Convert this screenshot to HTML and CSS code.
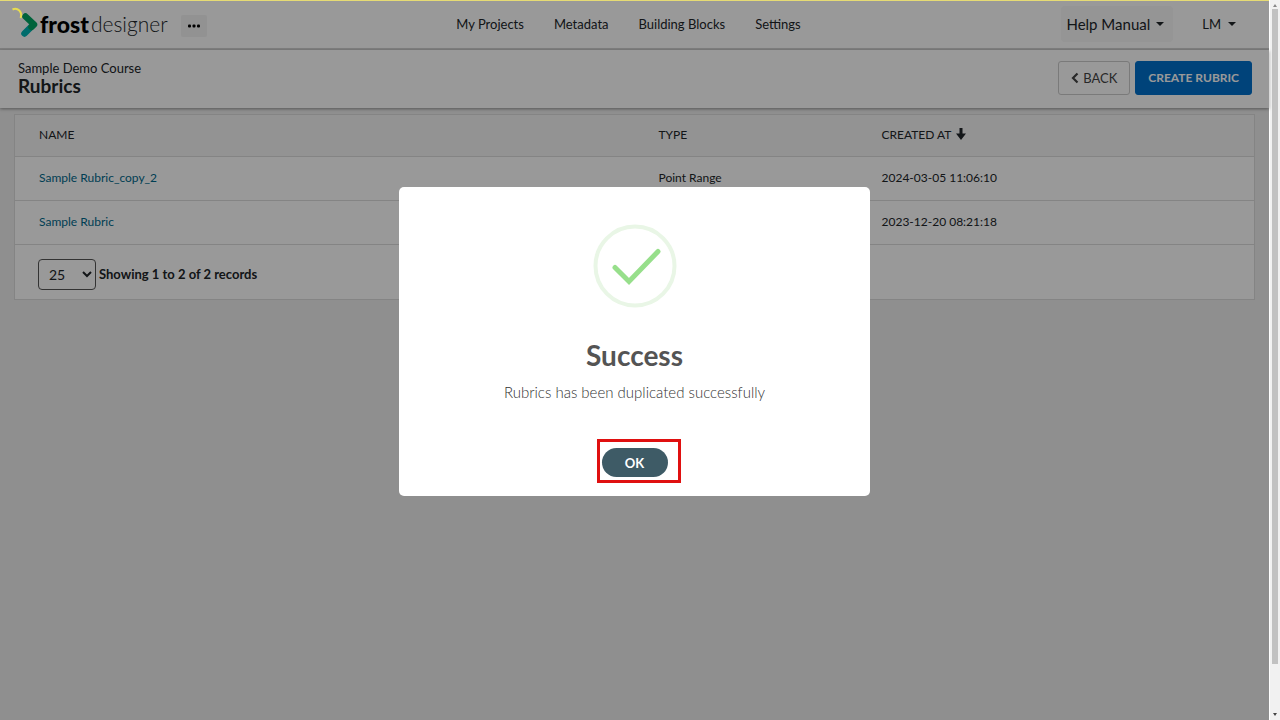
FILE: index.html
```html
<!DOCTYPE html>
<html lang="en">
<head>
<meta charset="utf-8">
<title>Rubrics - Frost Designer</title>
<link rel="stylesheet" href="styles.css">
</head>
<body>
<div class="app">
  <header class="topbar">
    <div class="brand">
      <svg class="brand-mark" viewBox="0 0 28 32" aria-hidden="true">
        <path d="M12.500 25.500 21.500 16.500" stroke="#00b5b5" stroke-width="6.500" stroke-linecap="round"/>
        <path d="M13.500 8.500 22 16.500 19.500 19" stroke="#00a663" stroke-width="6.500" stroke-linecap="round" stroke-linejoin="round" fill="none"/>
      </svg>
      <span class="brand-bold">frost</span><span class="brand-light">designer</span>
      <button class="more" type="button" aria-label="More">
        <svg viewBox="0 0 12 4" width="12" height="4" aria-hidden="true"><rect x="0" y="0.500" width="3" height="3" rx="1"/><rect x="4.500" y="0.500" width="3" height="3" rx="1"/><rect x="9" y="0.500" width="3" height="3" rx="1"/></svg>
      </button>
    </div>
    <nav class="menu">
      <a href="#">My Projects</a>
      <a href="#">Metadata</a>
      <a href="#">Building Blocks</a>
      <a href="#">Settings</a>
    </nav>
    <div class="account">
      <button class="help" type="button">Help Manual <span class="caret"></span></button>
      <button class="user" type="button">LM <span class="caret"></span></button>
    </div>
  </header>

  <section class="pagebar">
    <div>
      <div class="course">Sample Demo Course</div>
      <h1>Rubrics</h1>
    </div>
    <div class="actions">
      <button class="btn back" type="button">
        <svg viewBox="0 0 8 12" width="8" height="12" aria-hidden="true"><path d="M6.500 1.500 2 6l4.500 4.500" fill="none" stroke="currentColor" stroke-width="2.200"/></svg>
        BACK</button>
      <button class="btn create" type="button">CREATE RUBRIC</button>
    </div>
  </section>

  <main class="panel">
    <table class="rubrics">
      <thead>
        <tr>
          <th class="col-name" scope="col">NAME</th>
          <th class="col-type" scope="col">TYPE</th>
          <th scope="col">CREATED AT
            <svg viewBox="0 0 10 12" width="10" height="12" aria-hidden="true"><path d="M3.500 0h3v5.500H10L5 12 0 5.500h3.500z" fill="currentColor"/></svg>
          </th>
        </tr>
      </thead>
      <tbody>
        <tr><td><a href="#">Sample Rubric_copy_2</a></td><td>Point Range</td><td>2024-03-05 11:06:10</td></tr>
        <tr><td><a href="#">Sample Rubric</a></td><td></td><td>2023-12-20 08:21:18</td></tr>
      </tbody>
    </table>
    <div class="pager">
      <select id="page-size" aria-label="Records per page"><option>25</option></select>
      <label for="page-size">Showing 1 to 2 of 2 records</label>
    </div>
  </main>

  <div class="overlay">
    <div class="dialog" role="dialog" aria-modal="true" aria-labelledby="dialog-title">
      <svg class="tick" viewBox="0 0 84 84" aria-hidden="true">
        <circle cx="42" cy="42" r="39.500" fill="none" stroke="#e9f6e6" stroke-width="4"/>
        <path d="M22 43.500 36 57.500 65 27.500" fill="none" stroke="#97df8b" stroke-width="5" stroke-linecap="round"/>
      </svg>
      <h2 id="dialog-title">Success</h2>
      <p>Rubrics has been duplicated successfully</p>
      <div class="highlight"><button class="ok" type="button">OK</button></div>
    </div>
  </div>

  <div class="progress"></div>
  <svg class="spinner" viewBox="0 0 14 14" aria-hidden="true"><path d="M0.500 2.500C5.500 0 11 5 8.500 11" fill="none" stroke="#e8dc50" stroke-width="2"/></svg>
</div>
<div class="scrollbar" aria-hidden="true">
  <span class="arrow up"></span>
  <span class="thumb"></span>
  <span class="arrow down"></span>
</div>
</body>
</html>
```

FILE: styles.css
```css
* { box-sizing: border-box; }

body {
  margin: 0;
  min-height: 100vh;
  display: flex;
  font-family: Lato, sans-serif;
  font-size: 13px;
  line-height: 20px;
  color: #212529;
}

button, select { font: inherit; color: inherit; }
a { text-decoration: none; }

.app {
  position: relative;
  flex: 1;
  background: #eee;
}

.topbar {
  display: grid;
  grid-template-columns: 1fr auto 1fr;
  align-items: center;
  height: 50px;
  padding: 0 24px 0 12px;
  background: #fff;
  border-bottom: 2px solid #d4d4d4;
}

.brand { display: flex; align-items: center; }
.brand-mark { width: 28px; height: 32px; fill: none; }
.brand-bold {
  font-size: 23px;
  font-weight: 900;
  line-height: 32px;
  color: #000;
}
.brand-light {
  margin-left: 2px;
  font-size: 21px;
  font-weight: 300;
  line-height: 32px;
}
.more {
  display: grid;
  place-items: center;
  width: 26px;
  height: 22px;
  margin: 4px 0 0 13px;
  padding: 0;
  border: 0;
  border-radius: 2px;
  background: #f4f4f4;
}

.menu { display: flex; gap: 30px; }
.menu a { color: #212529; }

.account {
  display: flex;
  justify-content: flex-end;
  gap: 20px;
}
.account button {
  display: flex;
  align-items: center;
  border: 0;
  background: none;
}
.account .help {
  gap: 6px;
  height: 36px;
  padding: 0 9px 0 5px;
  border-radius: 4px;
  background: #f8f8f8;
  font-size: 15px;
}
.account .user { gap: 7px; padding: 0 9px; }
.caret {
  border: 4px solid transparent;
  border-top-color: currentColor;
  border-bottom: 0;
}

.pagebar {
  display: flex;
  justify-content: space-between;
  align-items: center;
  height: 58px;
  padding: 0 17px 2px 18px;
  background: #fff;
  box-shadow: 0 1px 3px rgba(0, 0, 0, .4);
}
.course { line-height: 16px; }
h1 {
  margin: 0;
  font-size: 19px;
  font-weight: 700;
  line-height: 20px;
}
.actions { display: flex; gap: 5px; }
.btn {
  display: flex;
  align-items: center;
  gap: 4px;
  height: 34px;
  padding: 0 12px;
  border: 1px solid #ccc;
  border-radius: 3px;
  background: #fff;
}
.btn.back { color: #444; padding: 0 12px; }
.btn.create {
  border-color: #0070cc;
  background: #0070cc;
  color: #fff;
  font-size: 12px;
  font-weight: 700;
}

.panel {
  margin: 6px 14px 0;
  border: 1px solid #ddd;
  background: #fff;
}
.rubrics {
  width: 100%;
  border-collapse: collapse;
  table-layout: fixed;
  font-size: 12px;
}
.rubrics th {
  height: 41px;
  background: #f6f6f6;
  font-weight: 400;
  text-align: left;
}
.rubrics th svg { margin-left: 2px; vertical-align: -1px; }
.rubrics td { height: 44px; }
.rubrics th, .rubrics td {
  padding: 0 24px;
  border-bottom: 1px solid #ddd;
}
.rubrics td a { color: #00698c; }
.col-name { width: 50%; }
.col-type { width: 18%; }

.pager {
  display: flex;
  align-items: center;
  gap: 3px;
  padding: 14px 23px 9px;
  font-weight: 700;
}
.pager select {
  width: 58px;
  height: 31px;
  padding: 0 0 0 6px;
  border: 1px solid #555;
  border-radius: 4px;
  background: #fff;
  font-size: 14px;
  font-weight: 400;
}

.overlay {
  position: absolute;
  inset: 0;
  display: flex;
  justify-content: center;
  align-items: flex-start;
  padding-top: 187px;
  background: rgba(0, 0, 0, .4);
}
.dialog {
  display: flex;
  flex-direction: column;
  align-items: center;
  width: 471px;
  padding: 37px 16px 13px;
  border-radius: 5px;
  background: #fff;
  color: #545454;
}
.tick { width: 84px; height: 84px; }
.dialog h2 {
  margin: 29px 0 0;
  font-size: 28px;
  font-weight: 700;
  line-height: 36px;
}
.dialog p {
  margin: 9px 0 37px;
  color: #333;
  font-size: 15px;
  font-weight: 300;
  line-height: 20px;
}
.highlight {
  margin-left: 8px;
  padding: 6px 10px 3px 2px;
  border: 3px solid #e01010;
}
.ok {
  display: block;
  width: 66px;
  height: 29px;
  padding: 0;
  border: 0;
  border-radius: 15px;
  background: #3e5b66;
  color: #fff;
  font-weight: 700;
}

.progress {
  position: absolute;
  top: 0;
  left: 0;
  right: 0;
  height: 1px;
  background: #e6db74;
}
.spinner {
  position: absolute;
  top: 7px;
  left: 12px;
  width: 14px;
  height: 14px;
}

.scrollbar {
  display: flex;
  flex-direction: column;
  align-items: center;
  width: 11px;
  padding: 4px 0;
  border-left: 1px solid #fff;
  background: #f1f1f1;
}
.thumb {
  flex: 0 0 92%;
  width: 6px;
  margin-top: 2px;
  background: #c1c1c1;
}
.arrow { border: 2px solid transparent; }
.up { border-top: 0; border-bottom: 3px solid #888; }
.down { margin-top: auto; border-bottom: 0; border-top: 3px solid #444; }
```
